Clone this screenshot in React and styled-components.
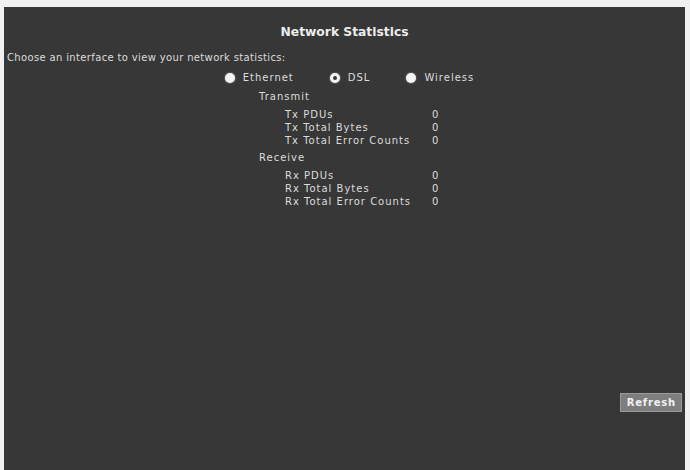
import styled, { createGlobalStyle } from "styled-components";

const GlobalStyle = createGlobalStyle`
  html, body {
    margin: 0;
    padding: 0;
    background: #f1f1f1;
  }
  body {
    font-family: "DejaVu Sans", Verdana, sans-serif;
  }
`;

const Page = styled.div`
  width: 690px;
  height: 470px;
  padding: 7px 5px 0 4px;
  box-sizing: border-box;
  overflow: hidden;
`;

const Panel = styled.div`
  height: 463px;
  background: #373737;
  color: #dcdcdc;
  display: flex;
  flex-direction: column;
  box-sizing: border-box;
  padding: 17px 3px 0 3px;
`;

const Title = styled.h2`
  margin: 0;
  text-align: center;
  font-size: 12.3px;
  font-weight: bold;
  color: #ececec;
  line-height: 16px;
`;

const Prompt = styled.p`
  margin: 11px 0 0;
  font-size: 10px;
  letter-spacing: 0.35px;
  line-height: 14px;
`;

const RadioRow = styled.div`
  display: flex;
  justify-content: center;
  gap: 36px;
  margin-top: 6px;
  padding-left: 10px;
  font-size: 10px;
  letter-spacing: 1px;
  line-height: 14px;
`;

const RadioOption = styled.label`
  display: flex;
  align-items: center;
  gap: 8px;
`;

const RadioDot = styled.span`
  width: 10px;
  height: 10px;
  border-radius: 50%;
  box-sizing: border-box;
  background: ${(p) => (p.checked ? "#373737" : "#f4f4f4")};
  border: ${(p) => (p.checked ? "3px solid #f4f4f4" : "none")};
  box-shadow: 0 0 2px rgba(255, 255, 255, 0.6);
`;

const Stats = styled.div`
  align-self: center;
  margin-top: 5px;
  margin-left: 14px;
  font-size: 10px;
  letter-spacing: 1px;
  line-height: 13px;
`;

const Section = styled.div`
  margin-bottom: 4px;
`;

const SectionTitle = styled.div`
  line-height: 13px;
  margin-bottom: 5px;
`;

const Row = styled.div`
  display: grid;
  grid-template-columns: 147px 12px;
  padding-left: 26px;
`;

const Footer = styled.div`
  margin-top: auto;
  display: flex;
  justify-content: flex-end;
  padding: 0 0 58px 0;
`;

const Button = styled.button`
  font-family: "DejaVu Sans", Verdana, sans-serif;
  font-size: 10px;
  font-weight: bold;
  color: #f2f2f2;
  background: #7e7e7e;
  border: 1px solid #9a9a9a;
  padding: 0 5px 0 6px;
  height: 19px;
  letter-spacing: 0.8px;
  cursor: pointer;
`;

const sections = [
  {
    name: "Transmit",
    rows: [
      ["Tx PDUs", 0],
      ["Tx Total Bytes", 0],
      ["Tx Total Error Counts", 0],
    ],
  },
  {
    name: "Receive",
    rows: [
      ["Rx PDUs", 0],
      ["Rx Total Bytes", 0],
      ["Rx Total Error Counts", 0],
    ],
  },
];

const interfaces = [
  { label: "Ethernet", checked: false },
  { label: "DSL", checked: true },
  { label: "Wireless", checked: false },
];

const App = () => {
  return (
    <Page>
      <GlobalStyle />
      <Panel>
        <Title>Network Statistics</Title>
        <Prompt>Choose an interface to view your network statistics:</Prompt>
        <RadioRow>
          {interfaces.map((item) => (
            <RadioOption key={item.label}>
              <RadioDot checked={item.checked} />
              {item.label}
            </RadioOption>
          ))}
        </RadioRow>
        <Stats>
          {sections.map((section) => (
            <Section key={section.name}>
              <SectionTitle>{section.name}</SectionTitle>
              {section.rows.map(([label, value]) => (
                <Row key={label}>
                  <span>{label}</span>
                  <span>{value}</span>
                </Row>
              ))}
            </Section>
          ))}
        </Stats>
        <Footer>
          <Button>Refresh</Button>
        </Footer>
      </Panel>
    </Page>
  );
};

export default App;
